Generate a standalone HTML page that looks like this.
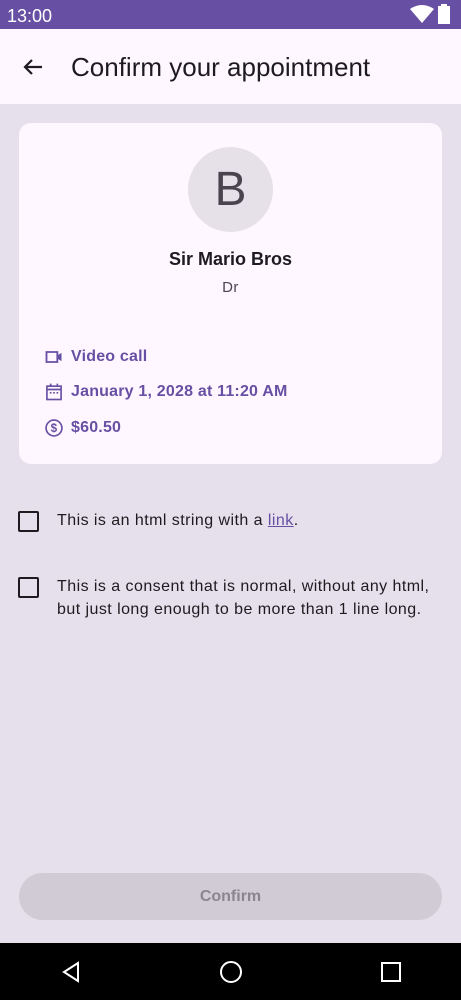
<!DOCTYPE html>
<html><head><style>
*{margin:0;padding:0;box-sizing:border-box}
body{width:461px;height:1000px;background:#e6e0ec;font-family:"Liberation Sans",sans-serif;position:relative;overflow:hidden;color:#1d1b20}
.status{position:absolute;top:0;left:0;width:461px;height:29px;background:#6750a4;color:#fff}
.status .t{position:absolute;left:7px;top:6px;font-size:18px}
.bar{position:absolute;top:29px;left:0;width:461px;height:75px;background:#fef7ff}
.bar .title{position:absolute;left:71px;top:23px;font-size:26px;color:#1d1b20}
.card{position:absolute;left:19px;top:123px;width:423px;height:341px;background:#fef7ff;border-radius:12px}
.av{position:absolute;left:169px;top:24px;width:85px;height:85px;border-radius:50%;background:#e6e0e9;color:#49454f;font-size:48px;text-align:center;line-height:85px}
.name{position:absolute;top:126px;width:100%;text-align:center;font-size:18px;font-weight:bold;color:#1d1b20}
.dr{position:absolute;top:156px;width:100%;text-align:center;font-size:15px;color:#49454f;letter-spacing:0.5px}
.row{position:absolute;left:25px;font-size:16px;font-weight:bold;color:#6750a4;display:flex;align-items:center;letter-spacing:0.2px}
.row svg{margin-right:7px}
.cb{position:absolute;left:18px;width:21px;height:21px;border:2px solid #1d1b20;border-radius:2px}
.txt{position:absolute;left:57px;font-size:16px;line-height:23px;color:#1d1b20;letter-spacing:0.45px}
.btn{position:absolute;left:19px;top:873px;width:423px;height:47px;border-radius:24px;background:#d0cbd5;color:#8a8590;text-align:center;line-height:47px;font-size:16px;font-weight:bold}
.nav{position:absolute;left:0;top:943px;width:461px;height:57px;background:#000}
</style></head><body>
<div class="status"><span class="t">13:00</span>
<svg style="position:absolute;left:410px;top:5px" width="24" height="18" viewBox="0 0 24 18"><path d="M0 4 Q12 -4 24 4 L12 18 Z" fill="#fff"/></svg>
<svg style="position:absolute;left:437px;top:4px" width="14" height="20"><rect x="1" y="2" width="12" height="18" fill="#fff"/><rect x="4" y="0" width="6" height="3" fill="#fff"/></svg>
</div>
<div class="bar">
<svg style="position:absolute;left:21px;top:26px" width="24" height="24" viewBox="0 0 24 24"><path d="M21 12H4M11 5l-7 7 7 7" fill="none" stroke="#1d1b20" stroke-width="2.2"/></svg>
<div class="title">Confirm your appointment</div></div>
<div class="card">
<div class="av">B</div>
<div class="name">Sir Mario Bros</div>
<div class="dr">Dr</div>
<div class="row" style="top:224px"><svg width="20" height="20" viewBox="0 0 24 24"><path d="M3 6h13v12H3z" fill="none" stroke="#6750a4" stroke-width="2.2"/><path d="M16 10l5-3v10l-5-3z" fill="#6750a4"/></svg>Video call</div>
<div class="row" style="top:259px"><svg width="20" height="20" viewBox="0 0 24 24"><rect x="3.5" y="5" width="17" height="16" fill="none" stroke="#6750a4" stroke-width="2"/><path d="M3.5 9h17M8 2v4M16 2v4" stroke="#6750a4" stroke-width="2"/><path d="M7 13h2M11 13h2M15 13h2" stroke="#6750a4" stroke-width="2"/></svg>January 1, 2028 at 11:20 AM</div>
<div class="row" style="top:295px"><svg width="20" height="20" viewBox="0 0 24 24"><circle cx="12" cy="12" r="9.5" fill="none" stroke="#6750a4" stroke-width="2"/><text x="12" y="17" font-size="14" font-weight="bold" text-anchor="middle" fill="#6750a4" font-family="Liberation Sans">$</text></svg>$60.50</div>
</div>
<div class="cb" style="top:511px"></div>
<div class="txt" style="top:509px">This is an html string with a <span style="color:#6750a4;text-decoration:underline">link</span>.</div>
<div class="cb" style="top:577px"></div>
<div class="txt" style="top:575px">This is a consent that is normal, without any html,<br>but just long enough to be more than 1 line long.</div>
<div class="btn">Confirm</div>
<div class="nav">
<svg style="position:absolute;left:60px;top:18px" width="22" height="22" viewBox="0 0 22 22"><path d="M18 2L4 11l14 9z" fill="none" stroke="#fff" stroke-width="2"/></svg>
<svg style="position:absolute;left:219px;top:17px" width="24" height="24"><circle cx="12" cy="12" r="10" fill="none" stroke="#fff" stroke-width="2"/></svg>
<svg style="position:absolute;left:381px;top:19px" width="20" height="20"><rect x="1" y="1" width="18" height="18" fill="none" stroke="#fff" stroke-width="2"/></svg>
</div>
</body></html>
